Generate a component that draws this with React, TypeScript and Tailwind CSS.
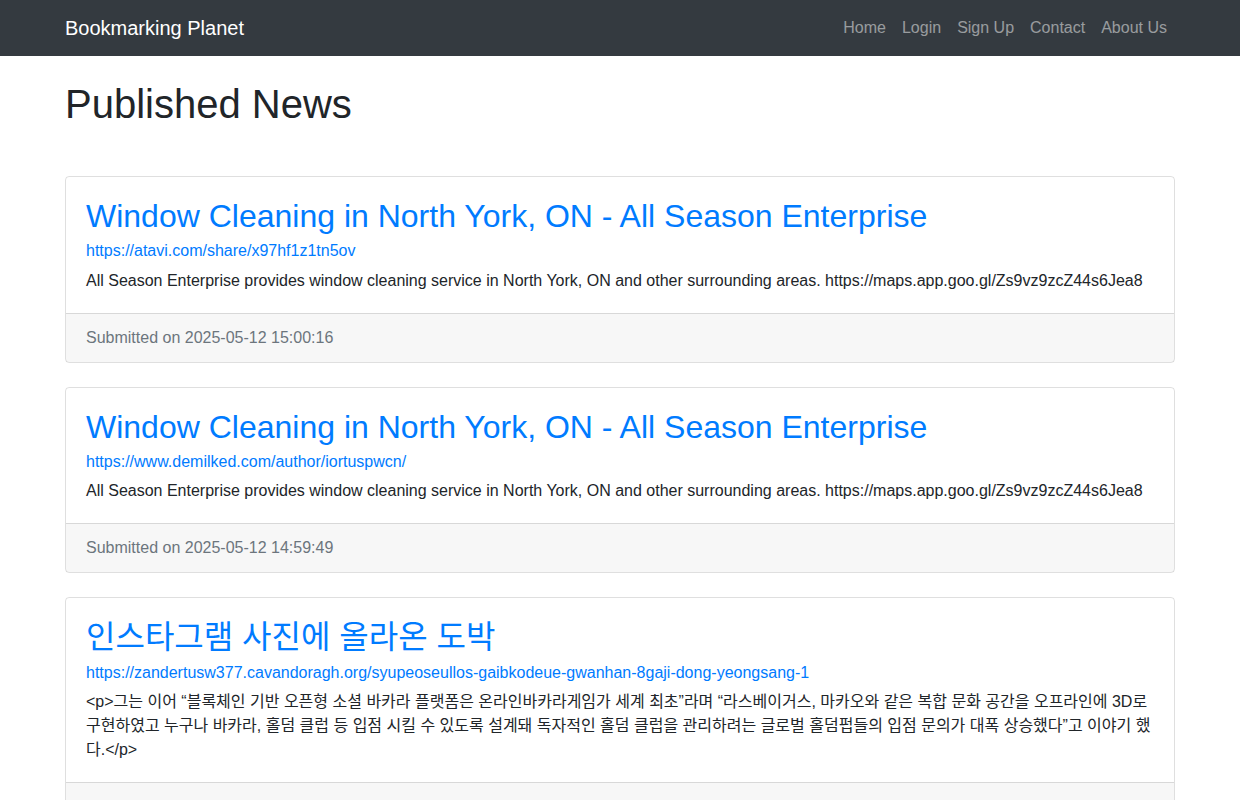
export default function App() {
  const cards = [
    { t: "Window Cleaning in North York, ON - All Season Enterprise", m: "mb-[3.8px]", u: "https://atavi.com/share/x97hf1z1tn5ov", b: "All Season Enterprise provides window cleaning service in North York, ON and other surrounding areas. https://maps.app.goo.gl/Zs9vz9zcZ44s6Jea8", s: "Submitted on 2025-05-12 15:00:16" },
    { t: "Window Cleaning in North York, ON - All Season Enterprise", m: "mb-[3.8px]", u: "https://www.demilked.com/author/iortuspwcn/", b: "All Season Enterprise provides window cleaning service in North York, ON and other surrounding areas. https://maps.app.goo.gl/Zs9vz9zcZ44s6Jea8", s: "Submitted on 2025-05-12 14:59:49" },
    { t: "인스타그램 사진에 올라온 도박", m: "mb-[4.2px]", u: "https://zandertusw377.cavandoragh.org/syupeoseullos-gaibkodeue-gwanhan-8gaji-dong-yeongsang-1", b: "<p>그는 이어 “블록체인 기반 오픈형 소셜 바카라 플랫폼은 온라인바카라게임가 세계 최초”라며 “라스베이거스, 마카오와 같은 복합 문화 공간을 오프라인에 3D로 구현하였고 누구나 바카라, 홀덤 클럽 등 입점 시킬 수 있도록 설계돼 독자적인 홀덤 클럽을 관리하려는 글로벌 홀덤펍들의 입점 문의가 대폭 상승했다”고 이야기 했다.</p>", s: "Submitted on 2025-05-12 14:59:20" },
  ];
  return (
    <div className="h-[800px] overflow-hidden bg-white text-[16px] leading-[24px] text-[#212529] font-['Liberation_Sans','Noto_Sans_CJK_KR',sans-serif]">
      <nav className="h-14 bg-[#343a40]">
        <div className="mx-auto flex h-14 w-[1140px] items-center justify-between px-[15px]">
          <a className="text-[20px] leading-[30px] text-white">Bookmarking Planet</a>
          <div className="flex text-[rgba(255,255,255,0.5)]">
            {["Home", "Login", "Sign Up", "Contact", "About Us"].map((n) => (
              <a key={n} className="px-2 py-2">{n}</a>
            ))}
          </div>
        </div>
      </nav>
      <main className="mx-auto w-[1140px] px-[15px]">
        <h1 className="mt-6 mb-12 text-[40px] leading-[48px] font-normal">Published News</h1>
        {cards.map((c, i) => (
          <div key={i} className="mb-6 rounded-[4px] border border-[rgba(0,0,0,0.125)]">
            <div className="p-5">
              <h2 className={`${c.m} text-[32px] leading-[38.4px] font-normal text-[#007bff]`}>{c.t}</h2>
              <a className="block text-[#007bff]">{c.u}</a>
              <p className="mt-[5.4px]">{c.b}</p>
            </div>
            <div className="border-t border-[rgba(0,0,0,0.125)] bg-[rgba(0,0,0,0.03)] px-5 py-3 text-[#6c757d]">{c.s}</div>
          </div>
        ))}
      </main>
    </div>
  );
}
